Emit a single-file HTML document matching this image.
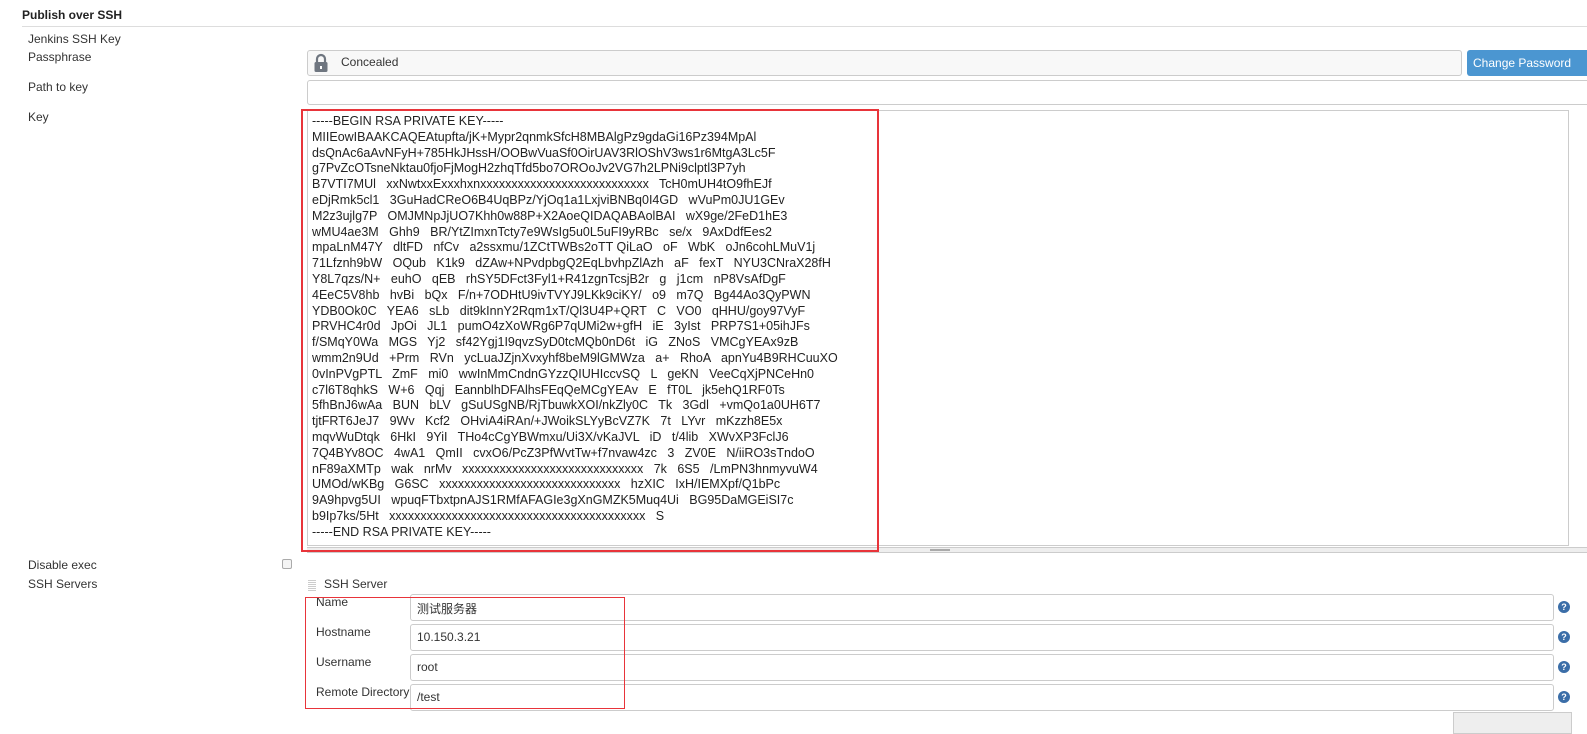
<!DOCTYPE html>
<html><head><meta charset="utf-8"><style>
body{margin:0;width:1587px;height:727px;overflow:hidden;background:#fff;font-family:"Liberation Sans","Noto Sans CJK SC",sans-serif;font-size:12px;color:#333;position:relative}
.a{position:absolute}
.lbl{position:absolute;left:28px;font-size:12px;color:#333}
.inp{position:absolute;border:1px solid #ccc;border-radius:3px;background:#fff;box-sizing:border-box}
.help{position:absolute;left:1558px;width:12px;height:12px;border-radius:50%;background:#3b6ea8;color:#fff;font-size:9px;font-weight:bold;text-align:center;line-height:12px}
pre{margin:0;font-family:"Liberation Sans",sans-serif;font-size:12.5px;line-height:15.8px;color:#222}
</style></head><body>
<div class="a" style="left:22px;top:8px;font-weight:bold;font-size:12px;color:#222">Publish over SSH</div>
<div class="a" style="left:22px;top:26px;width:1565px;height:1px;background:#ddd"></div>
<div class="lbl" style="top:32px">Jenkins SSH Key</div>
<div class="lbl" style="top:50px">Passphrase</div>
<div class="inp" style="left:307px;top:50px;width:1155px;height:26px;background:#f8f8f8"></div>
<svg class="a" style="left:313px;top:53px" width="16" height="20" viewBox="0 0 16 20"><path d="M4 9V6a4 4 0 0 1 8 0v3" fill="none" stroke="#6f7680" stroke-width="2.2"/><rect x="1.5" y="9" width="13" height="10" rx="1.5" fill="#6f7680"/><rect x="7" y="13" width="2" height="3" fill="#fff"/></svg>
<div class="a" style="left:341px;top:55px;font-size:12px;color:#333">Concealed</div>
<div class="a" style="left:1467px;top:50px;width:125px;height:26px;background:#4b96d1;border-radius:3px;color:#fff;font-size:12px;line-height:26px;padding-left:6px;box-sizing:border-box">Change Password</div>
<div class="lbl" style="top:80px">Path to key</div>
<div class="inp" style="left:307px;top:80px;width:1290px;height:25px"></div>
<div class="lbl" style="top:110px">Key</div>
<div class="inp" style="left:307px;top:110px;width:1262px;height:436px;border-radius:0"></div>
<div class="a" style="left:307px;top:547px;width:1280px;height:4px;background:#eee;border-top:1px solid #ccc;border-bottom:1px solid #ccc"></div>
<div class="a" style="left:930px;top:549px;width:20px;height:2px;background:#aaa"></div>
<div class="a" style="left:312px;top:114px"><pre>-----BEGIN RSA PRIVATE KEY-----
MIIEowIBAAKCAQEAtupfta/jK+Mypr2qnmkSfcH8MBAlgPz9gdaGi16Pz394MpAl
dsQnAc6aAvNFyH+785HkJHssH/OOBwVuaSf0OirUAV3RlOShV3ws1r6MtgA3Lc5F
g7PvZcOTsneNktau0fjoFjMogH2zhqTfd5bo7OROoJv2VG7h2LPNi9clptl3P7yh
B7VTI7MUl   xxNwtxxExxxhxnxxxxxxxxxxxxxxxxxxxxxxxxxxx   TcH0mUH4tO9fhEJf
eDjRmk5cl1   3GuHadCReO6B4UqBPz/YjOq1a1LxjviBNBq0I4GD   wVuPm0JU1GEv
M2z3ujlg7P   OMJMNpJjUO7Khh0w88P+X2AoeQIDAQABAolBAI   wX9ge/2FeD1hE3
wMU4ae3M   Ghh9   BR/YtZImxnTcty7e9WsIg5u0L5uFI9yRBc   se/x   9AxDdfEes2
mpaLnM47Y   dltFD   nfCv   a2ssxmu/1ZCtTWBs2oTT QiLaO   oF   WbK   oJn6cohLMuV1j
71Lfznh9bW   OQub   K1k9   dZAw+NPvdpbgQ2EqLbvhpZlAzh   aF   fexT   NYU3CNraX28fH
Y8L7qzs/N+   euhO   qEB   rhSY5DFct3Fyl1+R41zgnTcsjB2r   g   j1cm   nP8VsAfDgF
4EeC5V8hb   hvBi   bQx   F/n+7ODHtU9ivTVYJ9LKk9ciKY/   o9   m7Q   Bg44Ao3QyPWN
YDB0Ok0C   YEA6   sLb   dit9kInnY2Rqm1xT/Ql3U4P+QRT   C   VO0   qHHU/goy97VyF
PRVHC4r0d   JpOi   JL1   pumO4zXoWRg6P7qUMi2w+gfH   iE   3yIst   PRP7S1+05ihJFs
f/SMqY0Wa   MGS   Yj2   sf42Ygj1I9qvzSyD0tcMQb0nD6t   iG   ZNoS   VMCgYEAx9zB
wmm2n9Ud   +Prm   RVn   ycLuaJZjnXvxyhf8beM9lGMWza   a+   RhoA   apnYu4B9RHCuuXO
0vInPVgPTL   ZmF   mi0   wwInMmCndnGYzzQIUHIccvSQ   L   geKN   VeeCqXjPNCeHn0
c7l6T8qhkS   W+6   Qqj   EannblhDFAlhsFEqQeMCgYEAv   E   fT0L   jk5ehQ1RF0Ts
5fhBnJ6wAa   BUN   bLV   gSuUSgNB/RjTbuwkXOI/nkZly0C   Tk   3Gdl   +vmQo1a0UH6T7
tjtFRT6JeJ7   9Wv   Kcf2   OHviA4iRAn/+JWoikSLYyBcVZ7K   7t   LYvr   mKzzh8E5x
mqvWuDtqk   6HkI   9YiI   THo4cCgYBWmxu/Ui3X/vKaJVL   iD   t/4lib   XWvXP3FclJ6
7Q4BYv8OC   4wA1   QmII   cvxO6/PcZ3PfWvtTw+f7nvaw4zc   3   ZV0E   N/iiRO3sTndoO
nF89aXMTp   wak   nrMv   xxxxxxxxxxxxxxxxxxxxxxxxxxxxx   7k   6S5   /LmPN3hnmyvuW4
UMOd/wKBg   G6SC   xxxxxxxxxxxxxxxxxxxxxxxxxxxxx   hzXIC   IxH/IEMXpf/Q1bPc
9A9hpvg5UI   wpuqFTbxtpnAJS1RMfAFAGIe3gXnGMZK5Muq4Ui   BG95DaMGEiSI7c
b9Ip7ks/5Ht   xxxxxxxxxxxxxxxxxxxxxxxxxxxxxxxxxxxxxxxxx   S
-----END RSA PRIVATE KEY-----</pre></div>
<div class="a" style="left:301px;top:109px;width:574px;height:439px;border:2.5px solid #e8343a"></div>
<div class="lbl" style="top:558px">Disable exec</div>
<div class="a" style="left:282px;top:559px;width:8px;height:8px;border:1px solid #aaa;border-radius:2px;background:#f4f4f4"></div>
<div class="lbl" style="top:577px">SSH Servers</div>
<div class="a" style="left:308px;top:579px;width:8px;height:12px;background:repeating-linear-gradient(0deg,#ccc 0 1px,#fff 1px 2px)"></div>
<div class="a" style="left:324px;top:577px;font-size:12px">SSH Server</div>
<div class="a" style="left:316px;top:595px">Name</div>
<div class="a" style="left:316px;top:625px">Hostname</div>
<div class="a" style="left:316px;top:655px">Username</div>
<div class="a" style="left:316px;top:685px">Remote Directory</div>
<div class="inp" style="left:410px;top:594px;width:1144px;height:27px"></div>
<div class="inp" style="left:410px;top:624px;width:1144px;height:27px"></div>
<div class="inp" style="left:410px;top:654px;width:1144px;height:27px"></div>
<div class="inp" style="left:410px;top:684px;width:1144px;height:27px"></div>
<div class="a" style="left:417px;top:600px">测试服务器</div>
<div class="a" style="left:417px;top:630px">10.150.3.21</div>
<div class="a" style="left:417px;top:660px">root</div>
<div class="a" style="left:417px;top:690px">/test</div>
<div class="help" style="top:601px">?</div>
<div class="help" style="top:631px">?</div>
<div class="help" style="top:661px">?</div>
<div class="help" style="top:691px">?</div>
<div class="a" style="left:305px;top:597px;width:318px;height:110px;border:1px solid #e8343a"></div>
<div class="a" style="left:1453px;top:712px;width:117px;height:20px;background:#eee;border:1px solid #ccc"></div>
</body></html>
